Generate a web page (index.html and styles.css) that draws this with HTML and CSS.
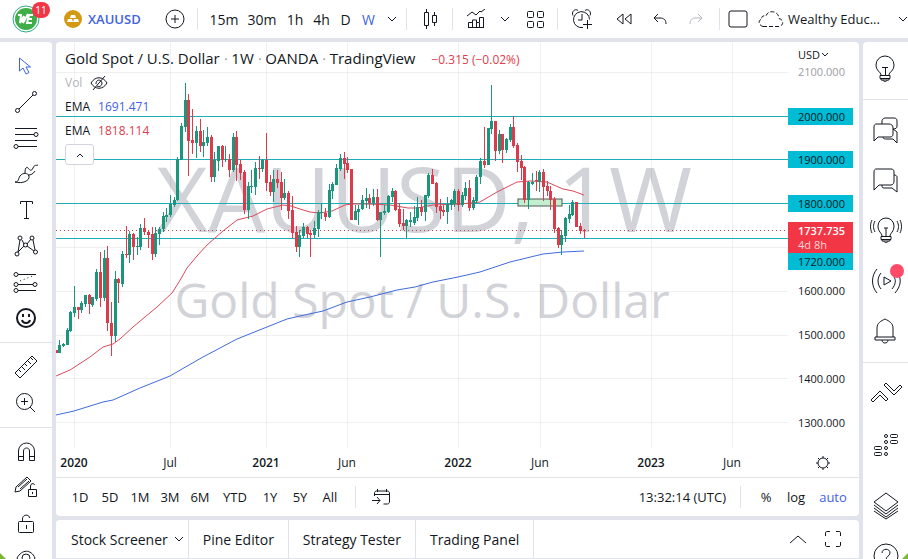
FILE: index.html
```html
<!DOCTYPE html>
<html lang="en">
<head>
    <meta charset="UTF-8">
    <meta name="viewport" content="width=device-width, initial-scale=1.0">
    <title>XAUUSD 1W</title>
    <link rel="stylesheet" href="styles.css">
</head>
<body>
    <header class="topbar">
        <button class="avatar" aria-label="Account">
            <svg width="28" height="28" viewBox="0 0 28 28"><circle cx="14" cy="14" r="13" fill="#fff" stroke="#2fa98c"/><circle cx="14" cy="14" r="11" fill="#3fae49"/><path d="M6 10h3l-1 8 4-7M12 11l-1 7 5-9M21 10h-4l-2 8h5M16 14h4" fill="none" stroke="#fff" stroke-width="2"/></svg>
            <span class="badge">11</span>
        </button>
        <button class="symbol">
            <svg width="18" height="18" viewBox="0 0 18 18"><circle cx="9" cy="9" r="9" fill="#d29a12"/><path d="M7 5h4l1 3H6zM4 9h4l1 3H3zM10 9h4l1 3H9z" fill="#fff"/></svg>
            XAUUSD
        </button>
        <button class="tool-md" aria-label="Compare"><svg width="20" height="20" viewBox="0 0 20 20"><circle cx="10" cy="10" r="9"/><path d="M10 6v8M6 10h8"/></svg></button>
        <span class="sep"></span>
        <nav class="intervals">
            <button>15m</button>
            <button>30m</button>
            <button>1h</button>
            <button>4h</button>
            <button>D</button>
            <button class="active">W</button>
            <button aria-label="More intervals"><svg width="10" height="6" viewBox="0 0 10 6"><path d="M1 1l4 4 4-4"/></svg></button>
        </nav>
        <span class="sep"></span>
        <button class="tool-md" aria-label="Candles"><svg width="16" height="20" viewBox="0 0 16 20"><path d="M2.500 3.500h4v13h-4zM4.500 0v3.500M4.500 16.500V20M10.500 6.500h4v7h-4zM12.500 3v3.500M12.500 13.500V17"/></svg></button>
        <span class="sep"></span>
        <button class="tool-md" aria-label="Indicators"><svg width="20" height="20" viewBox="0 0 20 20"><path d="M1 7l5-4 4 3 4-4 1 1 4-3M2.500 18.500v-5h4v5zM6.500 14v-3h4v7.500M10.500 13.500h3v5M13.500 13V8.500h4v10M2 18.500h16"/></svg></button>
        <button class="tool-xs" aria-label="Favorite indicators"><svg width="10" height="6" viewBox="0 0 10 6"><path d="M1 1l4 4 4-4"/></svg></button>
        <button class="tool-md" aria-label="Templates"><svg width="18" height="18" viewBox="0 0 18 18"><rect x="1.500" y="1.500" width="6" height="6" rx="1"/><rect x="11.500" y="1.500" width="6" height="6" rx="1"/><rect x="1.500" y="11.500" width="6" height="6" rx="1"/><rect x="11.500" y="11.500" width="6" height="6" rx="1"/></svg></button>
        <span class="sep"></span>
        <button class="tool-lg" aria-label="Alert"><svg width="22" height="22" viewBox="0 0 22 22"><path d="M12 19.500a8 8 0 1 1 6.500-8M11 6v6H7M2 7.500C0 4 4 0 7 2.500M19 7.500C21 4 17 0 14 2.500M16.500 12v9M12 16.500h9"/></svg></button>
        <button class="tool-sm" aria-label="Replay"><svg width="16" height="12" viewBox="0 0 16 12"><path d="M7 1v10L1 6zM15 1v10L9 6z"/></svg></button>
        <button class="tool-sm" aria-label="Undo"><svg width="14" height="12" viewBox="0 0 14 12"><path d="M5 1L1 5l4 4M1 5h6c4 0 6 2 6 6"/></svg></button>
        <button class="tool-sm faded" aria-label="Redo"><svg width="14" height="12" viewBox="0 0 14 12"><path d="M9 1l4 4-4 4M13 5H7c-4 0-6 2-6 6"/></svg></button>
        <span class="sep spaced"></span>
        <button class="tool-sm" aria-label="Layout"><svg width="20" height="18" viewBox="0 0 20 18"><rect x="1" y="1" width="18" height="16" rx="2"/></svg></button>
        <button class="save">
            <svg width="26" height="18" viewBox="0 0 26 18"><path d="M5 16.500h16c5-1 5-7 0-8C21 1 10-1 8 6 4 5 3 8 4 9c-4 1-4 6 1 7.500z" stroke-dasharray="4 2"/></svg>
            Wealthy Educ...
        </button>
        <button class="more" aria-label="Manage layouts"><svg width="10" height="6" viewBox="0 0 10 6"><path d="M1 1l4 4 4-4"/></svg></button>
    </header>

    <main class="workspace">
        <aside class="drawing">
            <div class="group">
                <button class="active" aria-label="Cursor"><svg viewBox="0 0 28 28"><path d="M7.500 6v13l3.500-3 3 6 3-1.500-3-5.500h4.500z"/></svg></button>
                <button aria-label="Trend line"><svg viewBox="0 0 28 28"><path d="M7 21L21 7"/><circle cx="5.500" cy="22.500" r="2"/><circle cx="22.500" cy="5.500" r="2"/></svg></button>
                <button aria-label="Fib retracement"><svg viewBox="0 0 28 28"><path d="M3 4.500h22M3 10.500h19M3 16.500h22M6 22.500h19"/><circle cx="24" cy="10.500" r="2"/><circle cx="4" cy="22.500" r="2"/></svg></button>
                <button aria-label="Brush"><svg viewBox="0 0 28 28"><path d="M3 22c4 0 3-3 5-6 3-4 8-3 9 0 1 5-7 8-14 6zM13 13c0-4 1-7 3-5s3 4 5 0 2-2 5-3M16 15c3 0 5-1 7-4"/></svg></button>
                <button aria-label="Text"><svg viewBox="0 0 28 28"><path d="M8.500 8V5.500h12V8M14.500 5v18M12 22.500h5"/></svg></button>
                <button aria-label="Patterns"><svg viewBox="0 0 28 28"><path d="M6 20L8 8M10 8l2 4M15 12l4-5M21 8l2 10M22 19l-7-5M12 14l-6 6"/><circle cx="8" cy="6" r="2"/><circle cx="20" cy="6" r="2"/><circle cx="13.500" cy="13" r="2"/><circle cx="5" cy="22" r="2"/><circle cx="23.500" cy="20" r="2"/></svg></button>
                <button aria-label="Prediction"><svg viewBox="0 0 28 28"><path d="M6 6.500h18M6 16.500h15M6 22.500h18"/><path d="M8 13l15-6" stroke-dasharray="1 3"/><circle cx="4" cy="6.500" r="2"/><circle cx="4" cy="16.500" r="2"/><circle cx="23" cy="16.500" r="2"/><circle cx="4" cy="22.500" r="2"/></svg></button>
                <button aria-label="Icons"><svg viewBox="0 0 28 28"><circle cx="14" cy="14" r="9" stroke-width="2"/><path d="M10 16c1 4 7 4 8 0" stroke-width="2"/><path d="M11 10v3M17 10v3" stroke-width="2"/></svg></button>
            </div>
            <div class="group">
                <button aria-label="Measure"><svg viewBox="0 0 28 28"><path d="M3 20L20 3l5 5L8 25zM7 17l2 2M10 14l3 3M13 11l2 2M16 8l3 3M19 5l2 2"/></svg></button>
                <button aria-label="Zoom in"><svg viewBox="0 0 28 28"><circle cx="12.500" cy="12.500" r="8"/><path d="M18 18l5 5M12.500 9v7M9 12.500h7"/></svg></button>
            </div>
            <div class="group">
                <button aria-label="Magnet"><svg viewBox="0 0 28 28"><path d="M6.500 22.500V13a8 8 0 0 1 16 0v9.500h-5V13c0-4-6-4-6 0v9.500zM7 18.500h5M17 18.500h5"/></svg></button>
                <button aria-label="Stay in drawing mode"><svg viewBox="0 0 28 28"><path d="M4 13L15 3l4 4L8 17l-5 1zM6 13l9-8M8 15l9-8M16.500 15.500h8v7h-8zM18.500 15v-3c0-3 4-3 4-1M20.500 18v2"/></svg></button>
                <button aria-label="Lock"><svg viewBox="0 0 28 28"><rect x="6.500" y="11.500" width="15" height="11" rx="1"/><path d="M10.500 11V9c0-5 7-5 7-1M14.500 15v4"/></svg></button>
                <button aria-label="Hide"><svg viewBox="0 0 28 28"><path d="M5 12c5-9 14-9 18 0-4 9-13 9-18 0z"/><circle cx="14" cy="12" r="4"/></svg></button>
            </div>
        </aside>

        <section class="center">
            <div class="card">
                <div class="chart">
                    <svg id="chart" class="plot" viewBox="56 42 803 435"></svg>
                    <div class="legend">
                        <h1>Gold Spot / U.S. Dollar <i>·</i> 1W <i>·</i> OANDA <i>·</i> TradingView <span class="change">−0.315 (−0.02%)</span></h1>
                        <p class="muted">Vol <svg width="18" height="16" viewBox="0 0 18 16"><path d="M1 8c4-7 12-7 16 0-4 7-12 7-16 0zM3 15L15 1M6 9c0-5 5-5 6-1M12 8c0 4-4 4-5 3"/></svg></p>
                        <p>EMA <span class="blue">1691.471</span></p>
                        <p>EMA <span class="red">1818.114</span></p>
                        <button class="collapse" aria-label="Collapse"><svg width="8" height="6" viewBox="0 0 8 6"><path d="M1 5l3-3 3 3"/></svg></button>
                    </div>
                    <button class="currency">USD<svg width="8" height="6" viewBox="0 0 8 6"><path d="M1 1l3 3 3-3"/></svg></button>
                    <button class="settings" aria-label="Chart settings"><svg width="16" height="16" viewBox="0 0 16 16"><circle cx="8" cy="8" r="5"/><path d="M8 1v2M8 13v2M1 8h2M13 8h2M3 3l2 2M11 11l2 2M13 3l-2 2M5 11l-2 2"/></svg></button>
                </div>
                <div class="ranges">
                    <button>1D</button>
                    <button>5D</button>
                    <button>1M</button>
                    <button>3M</button>
                    <button>6M</button>
                    <button class="wide">YTD</button>
                    <button>1Y</button>
                    <button>5Y</button>
                    <button>All</button>
                    <span class="sep"></span>
                    <button class="goto" aria-label="Go to date"><svg width="20" height="18" viewBox="0 0 20 18"><path d="M3.500 8V5c0-1 1-2 2-2h11c1 0 2 1 2 2v9c0 1-1 2-2 2h-4M3 6.500h15M6.500 1v3M15.500 1v3M1 12.500h8M6 9l3 3.500L6 16"/></svg></button>
                    <button class="clock">13:32:14 (UTC)</button>
                    <span class="sep"></span>
                    <button class="percent">%</button>
                    <button>log</button>
                    <button class="auto">auto</button>
                </div>
            </div>
            <footer class="tabs">
                <button class="screener">Stock Screener <svg width="10" height="6" viewBox="0 0 10 6"><path d="M1 1l4 4 4-4"/></svg></button>
                <button>Pine Editor</button>
                <button>Strategy Tester</button>
                <button>Trading Panel</button>
                <div class="panel-controls">
                    <button aria-label="Open panel"><svg width="18" height="9" viewBox="0 0 18 9"><path d="M1 8l8-7 8 7"/></svg></button>
                    <button aria-label="Full screen"><svg width="16" height="16" viewBox="0 0 16 16"><path d="M.500 5V2C.500 1 1 .500 2 .500h3M11 .500h3c1 0 1.500.500 1.500 1.500v3M15.500 11v3c0 1-.500 1.500-1.500 1.500h-3M5 15.500H2c-1 0-1.500-.500-1.500-1.500v-3"/></svg></button>
                </div>
            </footer>
        </section>

        <aside class="widgets">
            <div class="group">
                <button aria-label="Ideas"><svg viewBox="0 0 32 32"><path d="M11 21c0-3-5-4-5-10a9 9 0 0 1 18 0c0 6-5 7-5 10M10 21.500h10v3H10zM11 24v2h8v-2M13 26c0 2 4 2 4 0M15.500 21v-8M12 13.500h6"/></svg></button>
            </div>
            <div class="group">
                <button aria-label="Public chats"><svg viewBox="0 0 32 32"><path d="M6 9h13c2 0 4 1 4 4v6c0 2-1 3-3 3H8l-4 4V12c0-2 1-3 2-3zM12 9V6c0-1 1-3 3-3h9c2 0 3 1 3 3v5c0 2-1 3-4 3M13 22c0 2 2 2 4 2h6l4 4V17l-4-3"/></svg></button>
                <button aria-label="Private chats"><svg viewBox="0 0 32 32"><path d="M6 4h15c2 0 3 1 3 3v9c0 2-1 4-3 4H9l-5 5V7c0-2 1-3 2-3zM24 10c2 0 3 1 3 2v15l-5-4h-8c-2 0-2-1-2-3"/></svg></button>
                <button aria-label="Ideas stream"><svg viewBox="0 0 32 32"><path d="M12 21c0-3-4-4-4-10a8 8 0 0 1 16 0c0 6-4 7-4 10M11 21.500h10v3H11zM12 24v2h8v-2M14 26c0 2 4 2 4 0M16 21v-8M14 13h4M5 6c-2 4-2 7 0 11M2 5c-2 4-2 9 0 13M27 6c2 4 2 7 0 11M30 5c2 4 2 9 0 13"/></svg></button>
                <button class="live" aria-label="Streams"><svg viewBox="0 0 32 32"><path d="M14 12l7 4-7 4zM7 4c-6 7-6 17 0 24M11 8c-4 5-4 11 0 16M25 28c6-7 6-13 4-18M22 24c4-5 4-9 2-12"/></svg></button>
                <button aria-label="Notifications"><svg viewBox="0 0 32 32"><path d="M7 22V13c0-5 4-7 8-9 4 2 8 4 8 9v9M5 22h20v3H5zM12 25c0 4 6 4 6 0"/></svg></button>
            </div>
            <div class="group roomy">
                <button aria-label="Order panel"><svg viewBox="0 0 32 32"><path d="M1 22l9-9 8 8-2 2-6-6-7 7zM14 7l2-2 8 8 6-6 2 2-8 8z"/></svg></button>
                <button aria-label="DOM"><svg viewBox="0 0 32 32"><rect x="4.500" y="18.500" width="7" height="3" rx="1"/><rect x="4.500" y="24.500" width="7" height="3" rx="1"/><rect x="20.500" y="6.500" width="7" height="3" rx="1"/><rect x="20.500" y="12.500" width="7" height="3" rx="1"/><circle cx="16" cy="8" r="1.500"/><circle cx="16" cy="14" r="1.500"/><circle cx="16" cy="20" r="1.500"/><circle cx="16" cy="26" r="1.500"/></svg></button>
            </div>
            <div class="group bottom">
                <button aria-label="Object tree"><svg viewBox="0 0 32 32"><path d="M16 3l12 9-12 9-12-9zM4 15l12 9 12-9M4 18l12 9 12-9M4 21l12 8 12-8"/></svg></button>
                <button aria-label="Help"><svg viewBox="0 0 32 32"><circle cx="16" cy="16" r="12"/><path d="M12 13c0-5 8-5 8 0 0 3-4 3-4 7M16 22v2"/></svg></button>
            </div>
        </aside>
    </main>
    <span class="corner corner-left"></span>
    <span class="corner corner-right"></span>

    <script>
        const chart = document.getElementById("chart");
        const GREEN = "#1a967c";
        const RED = "#dc3b4b";

        // Weekly bars in chart units: open, high, low, close
        const bars = [
            [350,350,353,353],[353,340,353,345],[346,343,347,344],[345,328,345,330],[331,311,332,312],[313,286,317,307],
            [307,307,319,310],[310,301,313,303],[304,295,307,295],[295,294,314,304],[305,297,307,297],[299,269,301,272],
            [272,252,307,298],[298,250,301,258],[258,246,331,323],[323,302,356,336],[336,271,342,279],[279,278,303,283],
            [284,251,287,254],[254,226,258,255],[255,231,263,234],[234,233,260,247],[247,237,255,246],[247,224,250,228],
            [228,218,235,232],[232,230,248,235],[234,227,260,254],[254,227,257,233],[234,227,245,229],[229,212,232,216],
            [217,208,222,215],[215,195,217,204],[205,197,207,200],[200,157,201,159],[160,123,160,126],[127,83,132,100],
            [100,94,176,141],[140,109,154,143],[143,126,158,131],[131,119,152,146],[146,130,157,142],[143,127,146,137],
            [137,135,182,177],[177,152,182,160],[161,146,171,146],[146,145,167,160],[160,146,162,159],[159,154,177,170],
            [170,133,172,137],[137,131,181,165],[164,160,180,173],[172,170,214,210],[210,182,219,186],[187,170,193,186],
            [187,162,195,168],[168,156,179,169],[169,159,172,160],[160,133,191,183],[182,175,196,192],[192,170,202,179],
            [179,170,188,183],[182,172,210,198],[198,179,200,193],[193,191,219,211],[210,196,238,233],[232,226,252,247],
            [247,230,257,235],[236,223,238,227],[227,226,238,234],[233,230,257,235],[235,221,238,228],[229,210,237,212],
            [213,203,219,212],[213,208,221,217],[217,184,218,190],[191,182,199,184],[185,164,185,168],[169,154,171,158],
            [158,152,179,164],[163,157,173,170],[169,169,220,220],[220,205,220,211],[212,205,225,209],[209,195,210,200],
            [201,188,208,198],[198,194,209,203],[203,189,206,197],[197,189,221,220],[220,212,257,212],[213,205,215,211],
            [212,195,213,196],[197,188,202,191],[191,190,211,210],[209,203,227,224],[223,209,230,226],[226,219,238,220],
            [222,212,227,220],[223,206,225,217],[218,197,221,207],[207,200,216,212],[212,195,221,195],[196,173,198,175],
            [175,169,184,184],[183,182,213,207],[206,199,219,211],[210,205,216,212],[212,197,224,204],[205,199,210,200],
            [204,189,207,191],[191,189,211,205],[205,192,207,195],[196,182,200,188],[188,180,211,208],[208,197,210,200],
            [201,175,203,177],[177,158,184,161],[161,127,168,165],[165,128,165,128],[129,85,134,121],[121,121,161,151],
            [151,130,154,134],[134,134,163,150],[150,138,153,139],[140,124,142,127],[127,116,148,146],[145,143,172,162],
            [161,155,180,168],[167,166,203,200],[200,181,209,182],[184,173,185,182],[180,171,191,181],[182,170,192,172],
            [172,169,201,187],[186,181,196,191],[191,186,210,200],[199,197,233,229],[228,227,248,245],[245,230,255,235],
            [236,217,242,218],[219,205,223,214],[215,200,216,202],[202,202,227,227],[226,223,234,231],[230,229,238,231]
        ];
        const emaFast = "56,376 70,370 90,357 103,347 113,344 120,339 133,327 157,307 172,293 179,282 187,268 197,256 207,245 223,231 237,220 253,216 267,209 283,205 291,206 300,209 310,212 320,213 332,211 345,205 352,204 367,204 390,205 408,208 417,208 433,205 460,204 480,202 497,192 517,182 530,181 547,182 563,189 573,191 584,195";
        const emaSlow = "56,415 74,411 103,402 113,400 140,388 170,376 182,369 203,357 237,339 267,327 287,319 300,316 323,311 347,302 370,297 397,290 415,287 433,282 458,277 480,272 495,267 510,262 543,254 563,252 584,251";

        function draw(name, attrs, text) {
            const el = document.createElementNS("http://www.w3.org/2000/svg", name);
            for (const key in attrs) el.setAttribute(key, attrs[key]);
            if (text) el.textContent = text;
            chart.appendChild(el);
        }

        function rect(x, y, width, height, fill) {
            draw("rect", { x, y, width, height, fill });
        }

        // Watermark
        draw("text", { x: 424, y: 232, class: "mark mark-big" }, "XAUUSD, 1W");
        draw("text", { x: 422, y: 318, class: "mark mark-small" }, "Gold Spot / U.S. Dollar");

        // Grid and time axis
        const times = [[74, "2020"], [170, "Jul"], [266, "2021"], [347, "Jun"], [458, "2022"], [540, "Jun"], [651, "2023"], [732, "Jun"]];
        times.forEach(([x, label]) => {
            rect(x, 42, 1, 406, "rgba(42, 46, 57, 0.07)");
            draw("text", { x, y: 467, class: label.startsWith("20") ? "time year" : "time" }, label);
        });
        [72, 247, 291, 335, 378, 422].forEach((y) => rect(56, y, 732, 1, "rgba(42, 46, 57, 0.07)"));

        // Price levels
        [116, 159, 203, 238].forEach((y) => rect(56, y, 732, 1, "#1fadb8"));
        draw("path", { d: "M56 230.500H788", class: "last-price" });
        draw("rect", { x: 518, y: 199, width: 44, height: 7, class: "zone" });

        draw("polyline", { points: emaFast, class: "ema fast" });
        draw("polyline", { points: emaSlow, class: "ema slow" });

        // Candles
        bars.forEach(([open, high, low, close], i) => {
            const x = Math.floor(56 + i * 48 / 13);
            const color = close < open ? GREEN : RED;
            rect(x, high, 1, low - high, color);
            rect(x - 1, Math.min(open, close), 3, Math.max(1, Math.abs(open - close)), color);
        });

        // Price axis
        [[76, "2100.000"], [295, "1600.000"], [339, "1500.000"], [383, "1400.000"], [427, "1300.000"]].forEach(([y, label]) => {
            draw("text", { x: 798, y, class: y === 76 ? "price dim" : "price" }, label);
        });
        [[116, "2000.000"], [159, "1900.000"], [203, "1800.000"], [261, "1720.000"]].forEach(([y, label]) => {
            draw("rect", { x: 788, y: y - 8, width: 65, height: 17, fill: "#00bcd4" });
            draw("text", { x: 798, y: y + 5, class: "price" }, label);
        });
        rect(788, 222, 65, 31, "#f23645");
        draw("text", { x: 798, y: 235, class: "price last" }, "1737.735");
        draw("text", { x: 798, y: 249, class: "price countdown" }, "4d 8h");
    </script>
</body>
</html>
```
FILE: styles.css
```css
* {
    box-sizing: border-box;
}

body {
    margin: 0;
    height: 100vh;
    display: flex;
    flex-direction: column;
    gap: 4px;
    overflow: hidden;
    background-color: #e0e3eb;
    color: #131722;
    font-family: "Open Sans", "Noto Sans", sans-serif;
    font-size: 13px;
}

button {
    display: flex;
    align-items: center;
    justify-content: center;
    flex-shrink: 0;
    padding: 0;
    border: none;
    background: none;
    color: inherit;
    font: inherit;
    white-space: nowrap;
    cursor: pointer;
}

button:hover {
    color: #3f62e6;
}

svg {
    fill: none;
    stroke: currentColor;
    flex-shrink: 0;
}

.sep {
    flex-shrink: 0;
    width: 1px;
    height: 22px;
    background-color: #e0e3eb;
}

.active,
.blue,
.auto {
    color: #3f62e6;
}

.red {
    color: #e13d4d;
}

/* Top bar */
.topbar {
    display: flex;
    align-items: center;
    height: 38px;
    flex-shrink: 0;
    background-color: #fff;
}

.topbar > button {
    height: 38px;
}

.topbar .avatar {
    position: relative;
    width: 64px;
    justify-content: flex-start;
    padding-left: 12px;
}

.avatar svg,
.symbol svg {
    stroke: none;
}

.badge {
    position: absolute;
    left: 32px;
    top: 2px;
    width: 18px;
    height: 16px;
    border-radius: 8px;
    background-color: #f23645;
    color: #fff;
    font-size: 10px;
    line-height: 16px;
    text-align: center;
}

.symbol {
    width: 88px;
    gap: 6px;
    justify-content: flex-start;
    color: #3f62e6;
    font-weight: 600;
}

.tool-lg {
    width: 48px;
}

.tool-md {
    width: 45px;
}

.tool-sm {
    width: 36px;
}

.tool-xs {
    width: 14px;
}

.faded {
    color: #b2b5be;
}

.spaced {
    margin-left: 5px;
}

.intervals {
    display: flex;
    padding: 0 3px 0 7px;
    font-size: 14px;
}

.intervals button {
    width: 23px;
}

.intervals button:nth-child(-n+2) {
    width: 38px;
}

.intervals button:nth-child(3) {
    width: 28px;
}

.intervals button:nth-child(4) {
    width: 25px;
}

.save {
    gap: 4px;
    margin-left: 2px;
}

.more {
    margin-left: auto;
    width: 10px;
}

/* Side bars */
.workspace {
    flex: 1;
    min-height: 0;
    display: flex;
    gap: 4px;
}

.drawing,
.widgets {
    flex-shrink: 0;
    overflow: hidden;
    background-color: #fff;
}

.drawing {
    width: 52px;
    border-top-right-radius: 4px;
}

.widgets {
    width: 45px;
    border-top-left-radius: 4px;
}

.group {
    padding: 6px 0;
    border-bottom: 1px solid #e0e3eb;
}

.group button {
    width: 100%;
}

.drawing button {
    height: 36px;
}

.drawing svg {
    width: 28px;
    height: 28px;
}

.widgets .group {
    padding: 3px 0 4px;
}

.widgets button {
    height: 50px;
}

.widgets svg {
    width: 32px;
    height: 32px;
    overflow: visible;
}

.widgets .group + .group {
    padding: 6px 0;
}

.widgets .group + .roomy {
    border-bottom: none;
}

.live {
    position: relative;
}

.live::after {
    content: "";
    position: absolute;
    top: 8px;
    right: 4px;
    width: 14px;
    height: 14px;
    border-radius: 50%;
    background-color: #ff4a68;
}

.corner {
    position: absolute;
    bottom: 0;
    width: 6px;
    height: 6px;
    background-color: #7cb82f;
}

.corner-left {
    left: 0;
    clip-path: polygon(0 0, 100% 100%, 0 100%);
}

.corner-right {
    right: 0;
    clip-path: polygon(100% 0, 100% 100%, 0 100%);
}

/* Chart */
.center {
    flex: 1;
    min-width: 0;
    display: flex;
    flex-direction: column;
    gap: 4px;
}

.card {
    flex: 1;
    min-height: 0;
    display: flex;
    flex-direction: column;
    border-radius: 4px;
    background-color: #fff;
}

.chart {
    position: relative;
    flex: 1;
    min-height: 0;
}

.plot {
    display: block;
    width: 100%;
    height: 100%;
    stroke: none;
}

.plot text {
    fill: #131722;
}

.plot .mark {
    fill: #d2d3d8;
    text-anchor: middle;
}

.mark-big {
    font-size: 90px;
}

.mark-small {
    font-size: 48px;
}

.time {
    font-size: 12px;
    text-anchor: middle;
}

.price {
    font-size: 11px;
}

.year {
    font-weight: 600;
}

.plot .dim {
    fill: #9b9da3;
}

.plot .last {
    fill: #fff;
    font-weight: 600;
}

.plot .countdown {
    fill: #fcd7da;
}

.last-price {
    stroke: #b8404a;
    stroke-dasharray: 1 3;
}

.zone {
    fill: #c3efd0;
    stroke: #4b5a50;
}

.ema {
    fill: none;
    stroke-linejoin: round;
}

.fast {
    stroke: #dc4a5a;
}

.slow {
    stroke: #3f6bdc;
}

.legend {
    position: absolute;
    left: 9px;
    top: 5px;
}

.legend h1 {
    margin: 0;
    font-size: 15px;
    font-weight: 400;
    line-height: 23px;
    white-space: nowrap;
}

.legend i {
    color: #9598a1;
}

.legend .change {
    margin-left: 12px;
    color: #e13d4d;
    font-size: 12px;
}

.legend p {
    display: flex;
    align-items: center;
    gap: 8px;
    width: 90px;
    height: 24px;
    margin: 0;
    font-size: 12px;
}

.legend .muted {
    height: 23px;
    color: #b2b5be;
}

.muted svg {
    stroke: #131722;
}

.collapse {
    width: 29px;
    height: 21px;
    margin-top: 2px;
    border: 1px solid #d1d4dc;
    border-radius: 3px;
    background-color: #fff;
}

.currency {
    position: absolute;
    right: 30px;
    top: 4px;
    height: 17px;
    gap: 1px;
    font-size: 11px;
}

.settings {
    position: absolute;
    right: 28px;
    bottom: 6px;
}

/* Date ranges */
.ranges {
    display: flex;
    align-items: center;
    height: 39px;
    padding: 0 4px 0 9px;
    border-top: 1px solid #e0e3eb;
}

.ranges button {
    width: 30px;
    height: 38px;
}

.ranges .wide {
    width: 40px;
}

.ranges .sep {
    margin: 0 10px;
}

.ranges .clock {
    width: auto;
    margin-left: auto;
    padding: 0 4px;
}

.ranges .auto {
    width: 44px;
}

/* Bottom tabs */
.tabs {
    display: flex;
    height: 39px;
    flex-shrink: 0;
    border-bottom: 1px solid #e0e3eb;
    border-radius: 4px 4px 0 0;
    background-color: #fff;
    font-size: 14px;
}

.tabs > button {
    gap: 6px;
    padding: 0 14px;
    border-right: 1px solid #e0e3eb;
}

.tabs .screener {
    padding: 0 4px 0 15px;
}

.panel-controls {
    display: flex;
    gap: 18px;
    margin-left: auto;
    padding-right: 18px;
}
```
